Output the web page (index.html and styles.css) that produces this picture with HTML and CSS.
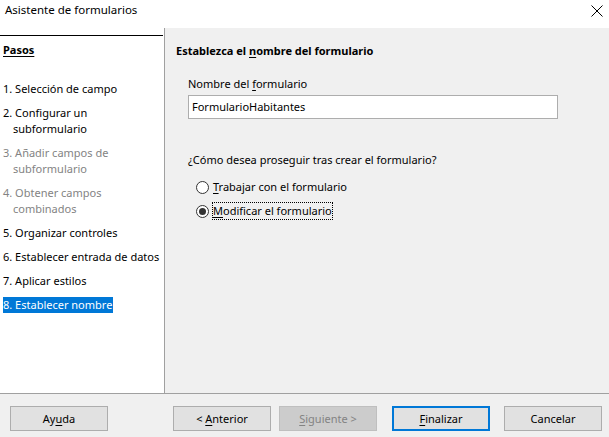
FILE: index.html
```html
<!DOCTYPE html>
<html lang="es">
<head>
<meta charset="utf-8">
<title>Asistente de formularios</title>
<link rel="stylesheet" href="styles.css">
</head>
<body>
<div class="window">
  <div class="titlebar">
    <span class="title">Asistente de formularios</span>
    <svg class="close" width="12" height="12" viewBox="0 0 12 12"><path d="M0.5 0.5 L11.5 11.5 M11.5 0.5 L0.5 11.5" stroke="#000" stroke-width="1" fill="none"/></svg>
  </div>
  <div class="main">
    <div class="steps">
      <div class="steps-head"><span class="u">Pasos</span></div>
      <ul class="step-list">
        <li class="step">1. Selección de campo</li>
        <li class="step">2. Configurar un<br><span class="indent">subformulario</span></li>
        <li class="step disabled">3. Añadir campos de<br><span class="indent">subformulario</span></li>
        <li class="step disabled">4. Obtener campos<br><span class="indent">combinados</span></li>
        <li class="step">5. Organizar controles</li>
        <li class="step">6. Establecer entrada de datos</li>
        <li class="step">7. Aplicar estilos</li>
        <li class="step"><span class="current">8. Establecer nombre</span></li>
      </ul>
    </div>
    <div class="content">
      <div class="heading">Establezca el <span class="u">n</span>ombre del formulario</div>
      <div class="field-label">Nombre del <span class="u">f</span>ormulario</div>
      <div class="input">FormularioHabitantes</div>
      <div class="question">¿Cómo desea proseguir tras crear el formulario?</div>
      <div class="radio-row"><span class="radio"></span><span class="radio-label"><span class="u">T</span>rabajar con el formulario</span></div>
      <div class="radio-row second"><span class="radio checked"></span><span class="radio-label focus"><span class="u">M</span>odificar el formulario</span></div>
    </div>
  </div>
  <div class="footer">
    <div class="btn help"><span>Ay<span class="u">u</span>da</span></div>
    <div class="nav">
      <div class="btn"><span>&lt; <span class="u">A</span>nterior</span></div>
      <div class="btn off"><span><span class="u">S</span>iguiente &gt;</span></div>
    </div>
    <div class="btn default"><span><span class="u">F</span>inalizar</span></div>
    <div class="btn"><span>Cancelar</span></div>
  </div>
</div>
</body>
</html>
```
FILE: styles.css
```css
* { box-sizing: border-box; }
html, body { margin: 0; padding: 0; }
body {
  font-family: "Noto Sans", "Open Sans", sans-serif;
  font-size: 11px;
  line-height: 16px;
  color: #000;
  background: #fff;
}
.window {
  width: 609px;
  height: 437px;
  display: flex;
  flex-direction: column;
  background: #f0f0f0;
}
.u { text-decoration: underline; text-underline-offset: 2px; }
.titlebar {
  height: 28px;
  background: #fff;
  display: flex;
  align-items: flex-start;
  justify-content: space-between;
  padding: 2px 6px 0 5px;
  font-size: 11.5px;
}
.close { margin-top: 3px; }
.main {
  flex: 1;
  display: flex;
  min-height: 0;
}
.steps {
  width: 165px;
  background: #fff;
  border-right: 1px solid #a0a0a0;
  padding-top: 7px;
  white-space: nowrap;
}
.steps-head {
  border-top: 1px solid #000;
  margin-right: 1px;
  padding: 6px 0 0 3px;
  font-weight: bold;
}
.step-list {
  list-style: none;
  margin: 23px 0 0;
  padding: 0 0 0 3px;
  display: flex;
  flex-direction: column;
  gap: 8px;
}
.indent { padding-left: 10px; }
.disabled { color: #838383; }
.current { background: #0078d7; color: #fff; display: inline-block; padding-right: 1px; }
.content {
  flex: 1;
  padding: 15px 0 0 11px;
}
.heading { font-weight: bold; }
.field-label { margin: 17px 0 0 12px; }
.input {
  margin: 3px 0 0 12px;
  width: 370px;
  height: 24px;
  background: #fff;
  border: 1px solid #adadad;
  padding: 3px 0 0 3px;
}
.question { margin: 33px 0 0 12px; }
.radio-row {
  display: flex;
  align-items: center;
  margin: 11px 0 0 20px;
  height: 16px;
}
.radio-row.second { margin-top: 8px; }
.radio {
  width: 13px;
  height: 13px;
  border: 1px solid #333;
  border-radius: 50%;
  background: #fff;
  margin-right: 4px;
  display: flex;
  align-items: center;
  justify-content: center;
}
.radio.checked::after {
  content: "";
  width: 7px;
  height: 7px;
  border-radius: 50%;
  background: #333;
}
.focus { outline: 1px dotted #000; outline-offset: 0; }
.footer {
  height: 44px;
  border-top: 1px solid #a0a0a0;
  display: flex;
  align-items: flex-start;
  padding: 12px 0 0 10px;
}
.btn {
  width: 98px;
  height: 25px;
  background: #e1e1e1;
  border: 1px solid #adadad;
  display: flex;
  align-items: center;
  justify-content: center;
}
.help { margin-right: 65px; }
.nav { display: flex; gap: 8px; margin-right: 15px; }
.btn.off { background: #cccccc; border-color: #bfbfbf; color: #838383; }
.btn.default { border: 2px solid #0078d7; margin-right: 14px; }
```
